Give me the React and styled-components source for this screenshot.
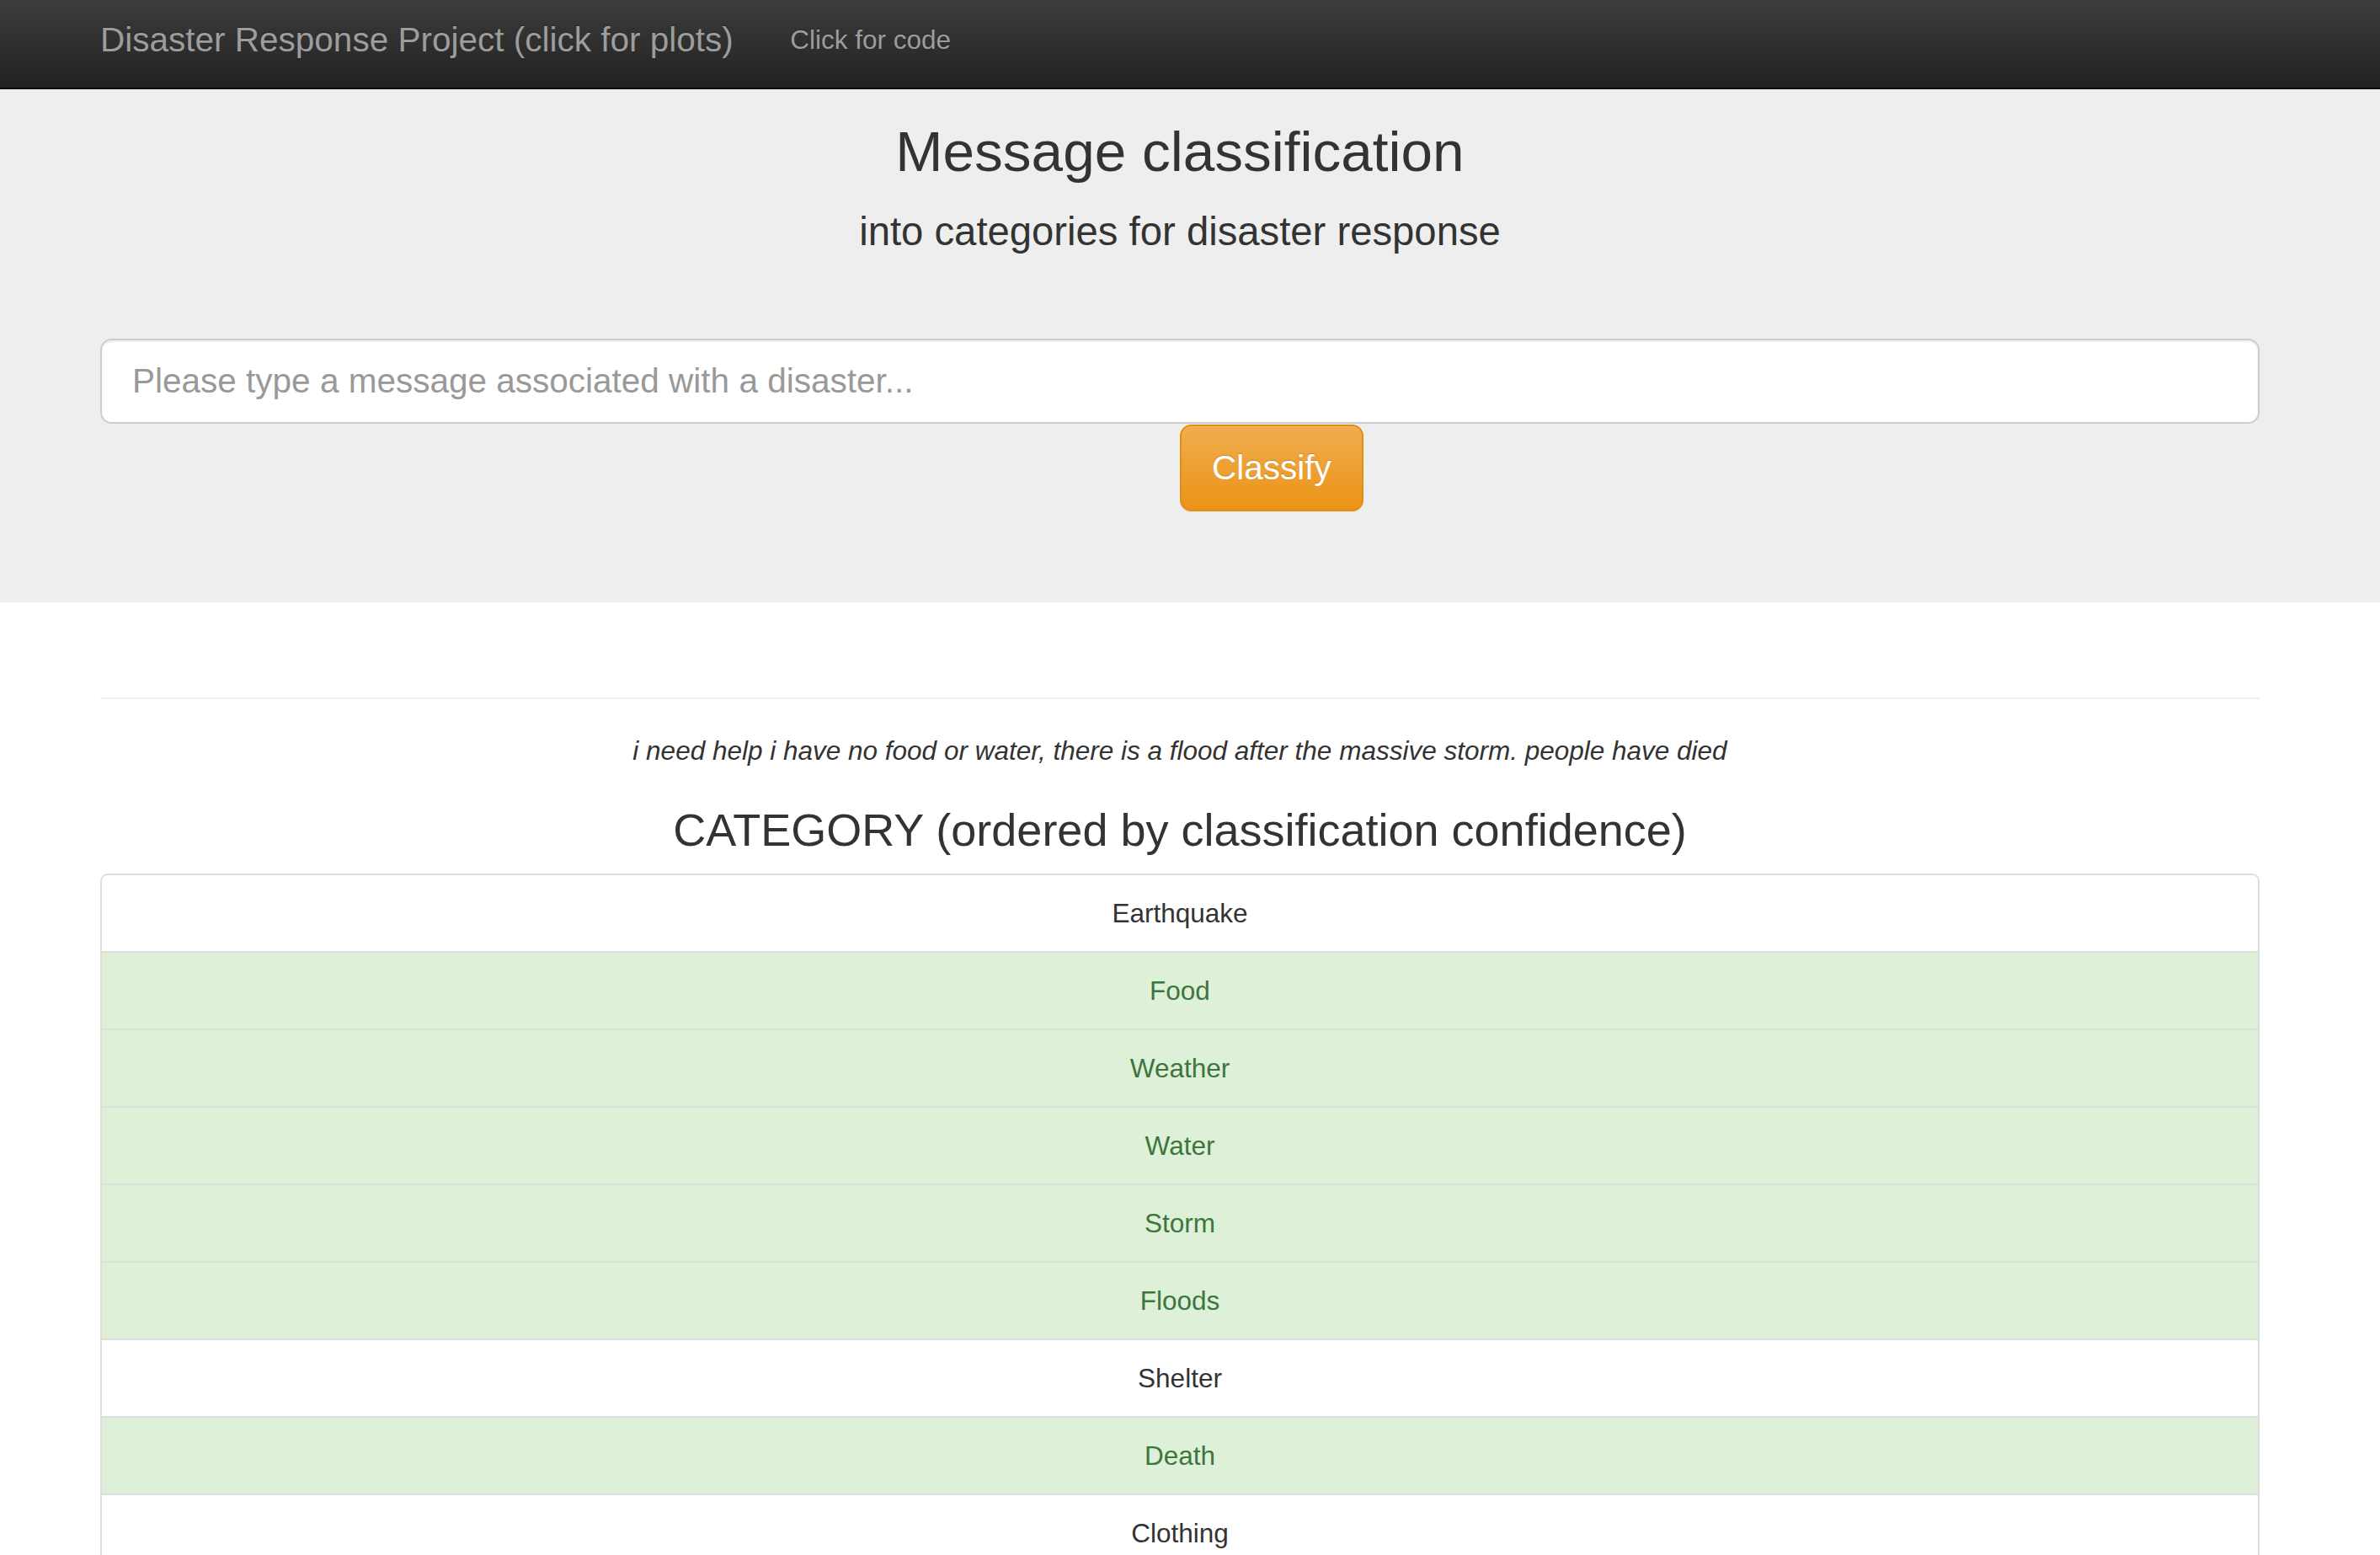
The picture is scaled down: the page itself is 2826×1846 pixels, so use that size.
import React from 'react';
import styled, {createGlobalStyle} from 'styled-components';

const categories = [
    {name: 'Earthquake', hit: false},
    {name: 'Food', hit: true},
    {name: 'Weather', hit: true},
    {name: 'Water', hit: true},
    {name: 'Storm', hit: true},
    {name: 'Floods', hit: true},
    {name: 'Shelter', hit: false},
    {name: 'Death', hit: true},
    {name: 'Clothing', hit: false},
    {name: 'Fire', hit: false},
    {name: 'Cold', hit: false},
];

const GlobalStyle = createGlobalStyle`
    * {
        box-sizing: border-box;
    }

    body {
        margin: 0;
        background: #fff;
        color: #333;
        font-family: "Liberation Sans", Helvetica, Arial, sans-serif;
        font-size: 31.5px;
    }
`;

const Container = styled.div`
    width: 100%;
    padding: 0 143px 0 119px;
`;

const Navbar = styled.nav`
    height: 106px;
    background: linear-gradient(to bottom, #3c3c3c 0, #222 100%);
    border-bottom: 2px solid #080808;
`;

const NavInner = styled(Container)`
    display: flex;
    align-items: center;
    height: 100%;
    padding-bottom: 10px;
`;

const Brand = styled.a`
    font-size: 40.5px;
    color: #9d9d9d;
    text-shadow: 0 -1px 0 rgba(0, 0, 0, .25);
    text-decoration: none;
    padding-right: 33.75px;
`;

const NavLink = styled.a`
    font-size: 31.5px;
    color: #9d9d9d;
    text-shadow: 0 -1px 0 rgba(0, 0, 0, .25);
    text-decoration: none;
    padding-left: 33.75px;
`;

const Jumbotron = styled.div`
    background: #eee;
    padding: 37px 0 108px;
`;

const Title = styled.h1`
    margin: 0;
    font-size: 67.5px;
    font-weight: 500;
    line-height: 74px;
    text-align: center;
`;

const Subtitle = styled.p`
    margin: 25px 0 0;
    font-size: 47.25px;
    line-height: 66px;
    text-align: center;
`;

const Input = styled.input`
    display: block;
    width: 100%;
    height: 101px;
    margin-top: 94px;
    padding: 0 36px;
    font-family: inherit;
    font-size: 40.5px;
    color: #555;
    background: #fff;
    border: 2px solid #ccc;
    border-radius: 13.5px;
    box-shadow: inset 0 2px 2px rgba(0, 0, 0, .075);

    &::placeholder {
        color: #999;
    }
`;

const ButtonRow = styled.div`
    padding-left: 50%;
    margin-top: 1px;
`;

const Button = styled.button`
    height: 103px;
    padding: 0 36px;
    font-family: inherit;
    font-size: 40.5px;
    color: #fff;
    text-shadow: 0 -1px 0 rgba(0, 0, 0, .2);
    background: linear-gradient(to bottom, #f0ad4e 0, #eb9316 100%);
    border: 2px solid #e38d13;
    border-radius: 13.5px;
    box-shadow: inset 0 1px 0 rgba(255, 255, 255, .15), 0 1px 1px rgba(0, 0, 0, .075);
`;

const Results = styled(Container)`
    padding-top: 113px;
`;

const Rule = styled.hr`
    margin: 0;
    border: 0;
    border-top: 2px solid #eee;
`;

const Message = styled.p`
    margin: 39px 0 0;
    font-size: 31.5px;
    line-height: 45px;
    font-style: italic;
    text-align: center;
`;

const Heading = styled.h3`
    margin: 41px 0 0;
    font-size: 54px;
    font-weight: 500;
    line-height: 60px;
    text-align: center;
`;

const List = styled.ul`
    margin: 22px 0 0;
    padding: 0;
    list-style: none;
    border: 2px solid #ddd;
    border-radius: 9px;
    overflow: hidden;
`;

const Item = styled.li`
    padding: 22.5px 33.75px;
    line-height: 45px;
    font-size: 31.5px;
    text-align: center;
    color: ${props => props.hit ? '#3c763d' : '#333'};
    background: ${props => props.hit ? '#dff0d8' : '#fff'};
    border-top: ${props => props.first ? '0' : '2px solid #ddd'};
`;

export default function App() {
    return (
        <>
            <GlobalStyle/>
            <Navbar>
                <NavInner>
                    <Brand href="#">Disaster Response Project (click for plots)</Brand>
                    <NavLink href="#">Click for code</NavLink>
                </NavInner>
            </Navbar>

            <Jumbotron>
                <Container>
                    <Title>Message classification</Title>
                    <Subtitle>into categories for disaster response</Subtitle>
                    <form onSubmit={e => e.preventDefault()}>
                        <Input type="text" placeholder="Please type a message associated with a disaster..."/>
                        <ButtonRow>
                            <Button type="submit">Classify</Button>
                        </ButtonRow>
                    </form>
                </Container>
            </Jumbotron>

            <Results>
                <Rule/>
                <Message>i need help i have no food or water, there is a flood after the massive storm. people have died</Message>
                <Heading>CATEGORY (ordered by classification confidence)</Heading>
                <List>
                    {categories.map((c, idx) => (
                        <Item key={c.name} hit={c.hit} first={idx === 0}>{c.name}</Item>
                    ))}
                </List>
            </Results>
        </>
    );
}
